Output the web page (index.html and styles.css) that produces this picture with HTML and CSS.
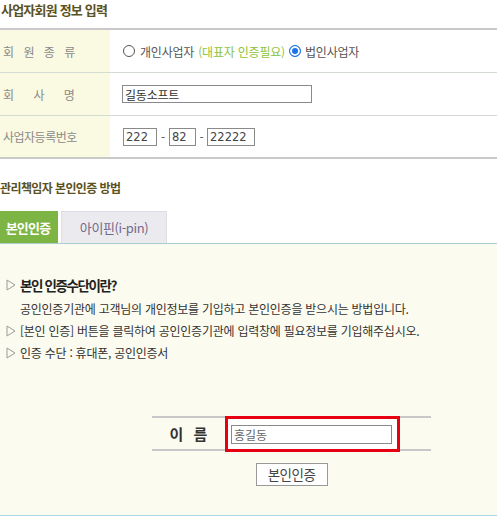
FILE: index.html
```html
<!DOCTYPE html>
<html lang="ko">
<head>
<meta charset="utf-8">
<title>사업자회원 정보 입력</title>
<link rel="stylesheet" href="styles.css">
</head>
<body>
<div class="page">
  <h2 class="sec-title t1">사업자회원 정보 입력</h2>
  <div class="info">
    <div class="row">
      <div class="label"><span class="sp3">회 원 종 류</span></div>
      <div class="value">
        <span class="radio"></span><span class="opt">개인사업자</span>
        <span class="note">(대표자 인증필요)</span>
        <span class="radio on"></span><span class="opt">법인사업자</span>
      </div>
    </div>
    <div class="row">
      <div class="label"><span class="sp8">회 사 명</span></div>
      <div class="value"><input class="field w190" type="text" value="길동소프트"></div>
    </div>
    <div class="row last">
      <div class="label">사업자등록번호</div>
      <div class="value">
        <input class="field num w34" type="text" value="222"><span class="dash">-</span><input class="field num w27" type="text" value="82"><span class="dash d2">-</span><input class="field num w48" type="text" value="22222">
      </div>
    </div>
  </div>

  <h2 class="sec-title t2">관리책임자 본인인증 방법</h2>
  <div class="tabs">
    <div class="tab active">본인인증</div>
    <div class="tab">아이핀(i-pin)</div>
  </div>
  <div class="panel">
    <ul class="guide">
      <li class="head"><svg class="tri" width="10" height="12" viewBox="0 0 10 12"><polygon points="1,1 9,6 1,11" fill="none" stroke="#9a9a9a" stroke-width="1"/></svg><strong>본인 인증수단이란?</strong></li>
      <li class="sub">공인인증기관에 고객님의 개인정보를 기입하고 본인인증을 받으시는 방법입니다.</li>
      <li><svg class="tri" width="10" height="12" viewBox="0 0 10 12"><polygon points="1,1 9,6 1,11" fill="none" stroke="#9a9a9a" stroke-width="1"/></svg>[본인 인증] 버튼을 클릭하여 공인인증기관에 입력창에 필요정보를 기입해주십시오.</li>
      <li><svg class="tri" width="10" height="12" viewBox="0 0 10 12"><polygon points="1,1 9,6 1,11" fill="none" stroke="#9a9a9a" stroke-width="1"/></svg>인증 수단 : 휴대폰, 공인인증서</li>
    </ul>
    <div class="auth">
      <div class="namebox">
        <div class="nlabel">이 름</div>
        <div class="redbox"><input class="nfield" type="text" value="홍길동"></div>
      </div>
      <div class="btnrow"><button class="btn" type="button">본인인증</button></div>
    </div>
  </div>
</div>
</body>
</html>
```

FILE: styles.css
```css
html, body {
  margin: 0;
  padding: 0;
  background: #fff;
}
body {
  width: 497px;
  overflow: hidden;
  font-family: "Noto Sans CJK KR", "Noto Sans", sans-serif;
  font-size: 12px;
  color: #555;
}
.page {
  width: 497px;
}
.sec-title {
  margin: 0;
  font-weight: bold;
  color: #5a5222;
  line-height: 20px;
}
.t1 {
  font-size: 13px;
  letter-spacing: -0.8px;
  padding-left: 1px;
  margin-bottom: 8px;
}
.t2 {
  font-size: 12px;
  letter-spacing: -0.6px;
  margin: 19px 0 13px 0;
}

/* info table */
.info {
  border-top: 2px solid #c9c9c9;
  border-bottom: 2px solid #c9c9c9;
}
.row {
  display: flex;
  height: 42px;
  border-bottom: 1px solid #d3dbd3;
}
.row.last {
  height: 41px;
  border-bottom: none;
}
.label {
  width: 107px;
  padding-left: 3px;
  background: #faf9e2;
  color: #8a8a8a;
  display: flex;
  align-items: center;
  letter-spacing: -0.5px;
  font-size: 12px;
}
.sp3 {
  letter-spacing: 3px;
}
.sp8 {
  letter-spacing: 8px;
}
.value {
  flex: 1;
  display: flex;
  align-items: center;
  padding-left: 12px;
  letter-spacing: -0.2px;
}
.radio {
  width: 12px;
  height: 12px;
  box-sizing: border-box;
  border-radius: 50%;
  border: 1px solid #555;
  background: #fff;
  margin-left: 1px;
  margin-right: 5px;
}
.radio.on {
  border: 1.5px solid #1a73e8;
  background: #1a73e8;
  box-shadow: inset 0 0 0 2px #fff;
  margin-left: 4px;
  margin-right: 4px;
}
.opt {
  color: #555;
}
.note {
  color: #8cc43c;
  margin-left: 4px;
}
.field {
  box-sizing: border-box;
  height: 18px;
  border: 1px solid #8a8a8a;
  padding: 0 2px;
  margin: 0;
  font-family: "Noto Sans CJK KR", "Noto Sans", sans-serif;
  font-size: 12px;
  letter-spacing: -0.2px;
  color: #333;
  background: #fff;
  outline: none;
}
.field.num {
  font-family: "DejaVu Sans", "Noto Sans", sans-serif;
  font-size: 11.5px;
  letter-spacing: 0;
  color: #444;
}
.w190 { width: 190px; margin-left: 0; }
.w34 { width: 34px; margin-left: 1px; }
.w27 { width: 27px; }
.w48 { width: 48px; }
.dash {
  width: 12px;
  text-align: center;
  color: #555;
}
.dash.d2 {
  width: 11px;
}

/* tabs */
.tabs {
  display: flex;
  gap: 3px;
  height: 32px;
  margin-left: -18px;
}
.tab {
  box-sizing: border-box;
  width: 106px;
  display: flex;
  align-items: center;
  justify-content: center;
  background: #ebebef;
  border: 1px solid #dcdce4;
  border-bottom: none;
  color: #76688a;
  font-size: 13px;
  letter-spacing: -0.4px;
}
.tab.active {
  width: 76px;
  padding-left: 16px;
  background: #7db544;
  border-color: #7db544;
  color: #fff;
  font-weight: bold;
  font-size: 13px;
  letter-spacing: -0.8px;
}

/* panel */
.panel {
  background: #fcfbef;
  border-top: 1px solid #a9cfcf;
  border-bottom: 1px solid #a8d8e6;
  padding: 30px 0 29px;
}
.guide {
  list-style: none;
  margin: 0;
  padding: 0 0 0 6px;
  color: #333;
  font-size: 12px;
  letter-spacing: -0.25px;
}
.guide li {
  line-height: 22px;
  display: flex;
  align-items: center;
}
.guide .head {
  margin-bottom: 2px;
  font-size: 13.5px;
  letter-spacing: -1.4px;
  color: #222;
}
.guide .sub {
  padding-left: 14px;
}
.tri {
  margin-right: 4px;
  flex: none;
}
.auth {
  margin: 52px 0 0 152px;
  width: 279px;
}
.namebox {
  display: flex;
  align-items: center;
  height: 31px;
  border-top: 2px solid #c8c8c8;
  border-bottom: 2px solid #c8c8c8;
}
.nlabel {
  width: 73px;
  text-align: center;
  font-weight: bold;
  font-size: 15px;
  letter-spacing: 3px;
  color: #333;
  padding-left: 3px;
  box-sizing: border-box;
}
.redbox {
  box-sizing: border-box;
  width: 175px;
  height: 36px;
  border: 3px solid #e60012;
  padding: 6px 0 0 3px;
  background: #fff;
}
.nfield {
  box-sizing: border-box;
  display: block;
  width: 161px;
  height: 19px;
  margin: 0;
  border: 1px solid #8a8a8a;
  padding: 0 2px;
  font-family: "Noto Sans CJK KR", "Noto Sans", sans-serif;
  font-size: 12px;
  color: #666;
  background: #fff;
  outline: none;
}
.btnrow {
  margin-top: 12px;
  text-align: center;
}
.btn {
  box-sizing: border-box;
  width: 72px;
  height: 23px;
  padding: 0;
  border: 1px solid #999;
  background: #fff;
  color: #444;
  font-family: "Noto Sans CJK KR", "Noto Sans", sans-serif;
  font-size: 13.5px;
  letter-spacing: -0.5px;
  line-height: 21px;
}
```
